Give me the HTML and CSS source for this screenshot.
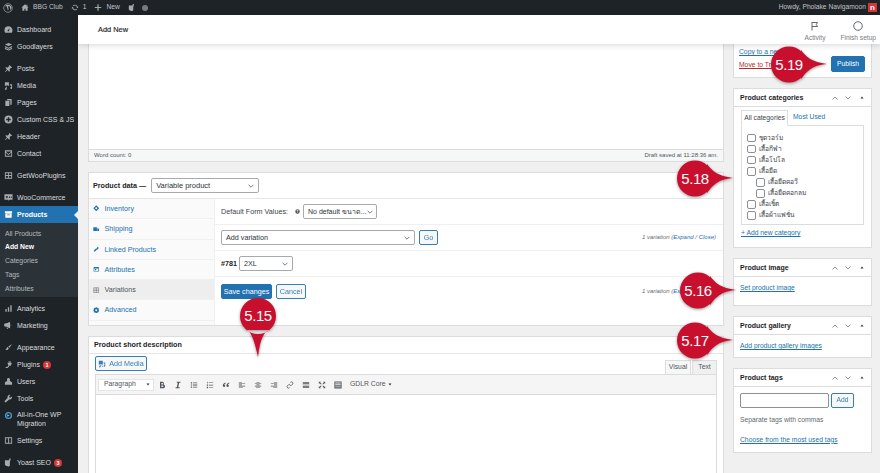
FILE: index.html
```html
<!DOCTYPE html>
<html lang="en">
<head>
<meta charset="utf-8">
<title>Add New Product</title>
<link rel="stylesheet" href="styles.css">
</head>
<body>
<svg class="defs" aria-hidden="true">
  <symbol id="i-wp" viewBox="0 0 20 20"><circle cx="10" cy="10" r="8.6" fill="none" stroke="currentColor" stroke-width="1.4"/><path d="M4 6.5h3.2L10 15l1.2-3.4-1.6-5.1h3.4L15.6 15l1.4-5c.3-1.4-.3-2.4-1-3.5L13 4 7 3.5z" fill="currentColor"/></symbol>
  <symbol id="i-home" viewBox="0 0 20 20"><path d="M10 2 1 10h2.5v8h5v-5h3v5h5v-8H19l-3-2.7V3h-2v2.5z" fill="currentColor"/></symbol>
  <symbol id="i-update" viewBox="0 0 20 20"><path d="M10 3a7 7 0 0 1 6.7 5H19l-3 4-3-4h1.6A5 5 0 0 0 6 7L4.5 5.6A7 7 0 0 1 10 3zM4 8l3 4H5.400A5 5 0 0 0 14 13l1.500 1.400A7 7 0 0 1 3.300 12H1z" fill="currentColor"/></symbol>
  <symbol id="i-plus" viewBox="0 0 20 20"><path d="M8.500 2h3v6.500H18v3h-6.500V18h-3v-6.500H2v-3h6.500z" fill="currentColor"/></symbol>
  <symbol id="i-yoast" viewBox="0 0 20 20"><path d="M2 5h11v13H5l-3-3zM12 1h3l-4 18H8z" fill="currentColor"/></symbol>
  <symbol id="i-gauge" viewBox="0 0 20 20"><path d="M10 3a9 9 0 0 0-9 9c0 2 .6 3.800 1.700 5h14.600A9 9 0 0 0 10 3zm1 9.500a1.500 1.500 0 1 1-2-1.400L13 7z" fill="currentColor"/></symbol>
  <symbol id="i-stack" viewBox="0 0 20 20"><path d="M10 2l8 3.500L10 9 2 5.500zM2 9l8 3.500L18 9v2.500L10 15l-8-3.500zM2 13l8 3.500 8-3.500v2.500L10 19l-8-3.500z" fill="currentColor"/></symbol>
  <symbol id="i-pin" viewBox="0 0 20 20"><path d="M12 2l6 6-1.500 1-1-.5-3 3 .5 4-1.500 1.500-3.500-3.500L3 18l-1 0 0-1 4.500-5L3 8.500 4.500 7l4 .5 3-3-.5-1z" fill="currentColor"/></symbol>
  <symbol id="i-media" viewBox="0 0 20 20"><path d="M2 3h9v7.500H8.500L7 9 5.500 10.500H2zM13 7h5v8.500a2 2 0 1 1-2-2V10h-3zM6 13v4.500a2 2 0 1 1-2-2v-2.500z" fill="currentColor"/></symbol>
  <symbol id="i-pages" viewBox="0 0 20 20"><path d="M7 2h10v13h-3V5H7zM3 6h9v12H3z" fill="currentColor"/></symbol>
  <symbol id="i-circle-plus" viewBox="0 0 20 20"><path d="M10 1a9 9 0 1 0 0 18 9 9 0 0 0 0-18zm-1.500 4h3v3.500H15v3h-3.500V15h-3v-3.500H5v-3h3.500z" fill="currentColor"/></symbol>
  <symbol id="i-mail" viewBox="0 0 20 20"><path d="M2 3h16v14H2zm2 3 6 5 6-5v-.5H4zm0 2.500V15h12V8.500l-6 5z" fill="currentColor" fill-rule="evenodd"/></symbol>
  <symbol id="i-grid" viewBox="0 0 20 20"><path d="M2 3h16v14H2zm2 2v4h5V5zm7 0v4h5V5zm-7 6v4h5v-4zm7 0v4h5v-4z" fill="currentColor" fill-rule="evenodd"/></symbol>
  <symbol id="i-woo" viewBox="0 0 20 20"><path d="M1 3h18v12h-7l-2 3v-3H1zm3 4 1 5 2-3 1 3 1-5zm7 1v3h2V8zm4 0v3h2V8z" fill="currentColor" fill-rule="evenodd"/></symbol>
  <symbol id="i-box" viewBox="0 0 20 20"><path d="M2 3h16v4H2zM3 8h14v9H3zm4 2v1.500h6V10z" fill="currentColor" fill-rule="evenodd"/></symbol>
  <symbol id="i-bars" viewBox="0 0 20 20"><path d="M3 11h3v6H3zM8.500 7h3v10h-3zM14 3h3v14h-3z" fill="currentColor"/></symbol>
  <symbol id="i-mega" viewBox="0 0 20 20"><path d="M12 2l1.500.5v13L12 16 6.500 13H4a4 4 0 0 1 0-8h2.500zM15 7a3 3 0 0 1 0 4.500zM6 14l2 .8.8 3.200H6.500z" fill="currentColor"/></symbol>
  <symbol id="i-brush" viewBox="0 0 20 20"><path d="M18 2 9.500 8l2.500 2.500L18 2zM8.500 9c-2 .5-2.500 2-3 3.500-.4 1-1.500 1.500-3 2 3 2 7 1.500 8-3z" fill="currentColor"/></symbol>
  <symbol id="i-plug" viewBox="0 0 20 20"><path d="M13 2h1.500v4H17v1.500l-2 5.500h-3l-1.500 2.500c-1.500 2-4 2.500-7 2.500v-2c2 0 4-.5 5-2L10 12 8 7.500V6h2.500V2H12v4h1z" fill="currentColor"/></symbol>
  <symbol id="i-user" viewBox="0 0 20 20"><path d="M10 2.500a3.500 3.500 0 0 1 2.300 6.200C15 9.500 18 11 18 13v4H2v-4c0-2 3-3.500 5.700-4.300A3.500 3.500 0 0 1 10 2.500z" fill="currentColor"/></symbol>
  <symbol id="i-wrench" viewBox="0 0 20 20"><path d="M17.500 5.500 14.500 8l-2.500-.5-.5-2.500L14.500 2A5 5 0 0 0 8 8.500L2 15a2 2 0 0 0 3 3l6.500-6A5 5 0 0 0 17.500 5.500z" fill="currentColor"/></symbol>
  <symbol id="i-migrate" viewBox="0 0 20 20"><path d="M10 2a8 8 0 1 0 0 16 8 8 0 0 0 0-16zm0 3a5 5 0 1 1 0 10 5 5 0 0 1 0-10z" fill="#3f9bd5" fill-rule="evenodd"/><path d="M7 7l6 3-6 3z" fill="currentColor"/></symbol>
  <symbol id="i-sliders" viewBox="0 0 20 20"><path d="M2 3h16v14H2zm2 2v10h5V5zm7 0v10h5V5zm-5 2h1v2H6zm7 3h1v2h-1z" fill="currentColor" fill-rule="evenodd"/></symbol>
  <symbol id="i-diamond" viewBox="0 0 20 20"><path d="M10 1l9 9-9 9-9-9zm0 6a3 3 0 1 0 0 6 3 3 0 0 0 0-6z" fill="currentColor" fill-rule="evenodd"/></symbol>
  <symbol id="i-truck" viewBox="0 0 20 20"><path d="M1 4h11v11H1zM13 7h3l3 3.500V15h-6z" fill="currentColor"/></symbol>
  <symbol id="i-link" viewBox="0 0 20 20"><path d="M14 2l4 4-6 6-2.500-1L9 9l3-3zM8 8l1 3 2 1-6 6-3-3z" fill="currentColor"/></symbol>
  <symbol id="i-attr" viewBox="0 0 20 20"><path d="M2 3h16v14H2zm2 5v7h12V8zm2 1h4v4H6z" fill="currentColor" fill-rule="evenodd"/></symbol>
  <symbol id="i-table" viewBox="0 0 20 20"><path d="M2.500 2.500h15v15h-15zM10 2.500v15M2.500 10h15" fill="none" stroke="currentColor" stroke-width="1.600"/></symbol>
  <symbol id="i-gear" viewBox="0 0 20 20"><path d="M8 1h4l.5 3 2.500-1.500 3 3L16.500 8l2.500.5v3l-2.500.5 1.500 2.500-3 3-2.500-1.500L12 19H8l-.5-3L5 17.500l-3-3L3.500 12 1 11.500v-3L3.500 8 2 5.500l3-3L7.500 4zM10 7a3 3 0 1 0 0 6 3 3 0 0 0 0-6z" fill="currentColor" fill-rule="evenodd"/></symbol>
  <symbol id="i-help" viewBox="0 0 20 20"><path d="M10 1a9 9 0 1 0 0 18 9 9 0 0 0 0-18zM9 14h2v2H9zm1-10a3.500 3.500 0 0 1 2 6.300c-.7.500-1 .9-1 2.200H9c0-2 .6-2.800 1.600-3.500.7-.5.900-.9.900-1.400a1.500 1.500 0 0 0-3 .4h-2A3.500 3.500 0 0 1 10 4z" fill="currentColor" fill-rule="evenodd"/></symbol>
  <symbol id="i-addmedia" viewBox="0 0 20 20"><path d="M2 2h10v9H9L7.500 9.500 6 11H2zM14 6h4v9a2 2 0 1 1-2-2V9h-2zM6.500 12v5a2 2 0 1 1-2-2v-3zM9 12h2v2H9zm1 3h2v2h-2z" fill="currentColor"/></symbol>
  <symbol id="i-flag" viewBox="0 0 20 20"><path d="M4 2v17M4 3h11l-2.500 4L15 11H4" fill="none" stroke="currentColor" stroke-width="1.800"/></symbol>
  <symbol id="i-ring" viewBox="0 0 20 20"><circle cx="10" cy="10" r="8.500" fill="none" stroke="currentColor" stroke-width="1.800"/></symbol>
  <symbol id="i-up" viewBox="0 0 12 8"><path d="M1 7l5-5 5 5" fill="none" stroke="currentColor" stroke-width="1.300"/></symbol>
  <symbol id="i-down" viewBox="0 0 12 8"><path d="M1 1l5 5 5-5" fill="none" stroke="currentColor" stroke-width="1.300"/></symbol>
  <symbol id="i-tri" viewBox="0 0 8 6"><path d="M4 1l3 4H1z" fill="currentColor"/></symbol>
  <symbol id="i-bold" viewBox="0 0 20 20"><path d="M5 2h6a4 4 0 0 1 3 6.500A4.500 4.500 0 0 1 11.500 18H5zm3.500 3v3.500H11A1.700 1.700 0 0 0 11 5zm0 6v4H11.500a2 2 0 0 0 0-4z" fill="currentColor" fill-rule="evenodd"/></symbol>
  <symbol id="i-italic" viewBox="0 0 20 20"><path d="M7 2h9v2.500h-3L10.500 15.500H14V18H4v-2.500h3L9.500 4.500H7z" fill="currentColor"/></symbol>
  <symbol id="i-ul" viewBox="0 0 20 20"><path d="M2 3h3v3H2zM7 3.500h11v2H7zM2 8.500h3v3H2zM7 9h11v2H7zM2 14h3v3H2zM7 14.500h11v2H7z" fill="currentColor"/></symbol>
  <symbol id="i-ol" viewBox="0 0 20 20"><path d="M3 2h1.500v4H3zM7 3.500h11v1.500H7zM2 8.500h3V12H2zM7 9.500h11V11H7zM2 14.500h3V18H2zM7 15h11v1.500H7z" fill="currentColor"/></symbol>
  <symbol id="i-quote" viewBox="0 0 20 20"><path d="M9 4C5 5 2 8 2 12a3 3 0 1 0 3.500-3c.5-1 1.800-2 3.500-3zM18 4c-4 1-7 4-7 8a3 3 0 1 0 3.500-3c.5-1 1.800-2 3.500-3z" fill="currentColor"/></symbol>
  <symbol id="i-al" viewBox="0 0 20 20"><path d="M2 3h8v1.500H2zM2 6h16v1.500H2zM2 9h8v1.500H2zM2 12h16v1.500H2zM2 15h10v1.500H2z" fill="currentColor"/></symbol>
  <symbol id="i-ac" viewBox="0 0 20 20"><path d="M6 3h8v1.500H6zM2 6h16v1.500H2zM6 9h8v1.500H6zM2 12h16v1.500H2zM5 15h10v1.500H5z" fill="currentColor"/></symbol>
  <symbol id="i-ar" viewBox="0 0 20 20"><path d="M10 3h8v1.500h-8zM2 6h16v1.500H2zM10 9h8v1.500h-8zM2 12h16v1.500H2zM8 15h10v1.500H8z" fill="currentColor"/></symbol>
  <symbol id="i-chain" viewBox="0 0 20 20"><path d="M11 3.500a3.500 3.500 0 0 1 5.500 4.500l-2.500 2.500a3.500 3.500 0 0 1-4.500.3M9 16.500A3.500 3.500 0 0 1 3.500 12L6 9.500a3.500 3.500 0 0 1 4.500-.3" fill="none" stroke="currentColor" stroke-width="2"/></symbol>
  <symbol id="i-more" viewBox="0 0 20 20"><path d="M2 3h16v4H2zM2 9h2v2H2zm4 0h3v2H6zm5 0h3v2h-3zm5 0h2v2h-2zM2 13h16v4H2z" fill="currentColor"/></symbol>
  <symbol id="i-full" viewBox="0 0 20 20"><path d="M2 2h5L5.500 3.500 9 7.500 7.500 9 3.500 5.500 2 7zM18 2v5l-1.500-1.500L12.500 9 11 7.500 14.500 3.500 13 2zM2 18v-5l1.500 1.500L7.500 11 9 12.500 5.500 16.500 7 18zM18 18h-5l1.500-1.500L11 12.500 12.500 11l4 3.500L18 13z" fill="currentColor"/></symbol>
  <symbol id="i-kitchen" viewBox="0 0 20 20"><path d="M1 1h18v18H1zm2 3v2h14V4zm0 4v2h14V8zm0 4v2h14v-2zm0 4v1h14v-1z" fill="currentColor" fill-rule="evenodd"/></symbol>
  <symbol id="i-caret" viewBox="0 0 10 6"><path d="M1 1l4 4 4-4" fill="none" stroke="currentColor" stroke-width="1.300"/></symbol>
  <symbol id="i-pin-right" viewBox="0 0 60 40"><path d="M19 1.500a18 18 0 1 1 0 36 18 18 0 0 1 0-36zM31 5c5 7 11 12 26 14-15 1-21 8-26 15z" fill="currentColor"/></symbol>
  <symbol id="i-pin-down" viewBox="0 0 40 62"><path d="M20 1a18 18 0 1 1 0 36 18 18 0 0 1 0-36zM8 33c5 1 8 9 12 27 2-18 6-26 12-27z" fill="currentColor"/></symbol>
</svg>

<div class="adminbar">
  <div class="bar-left">
    <svg class="bar-ic ic-wp"><use href="#i-wp"/></svg>
    <span class="bar-item"><svg class="bar-ic"><use href="#i-home"/></svg>BBG Club</span>
    <span class="bar-item"><svg class="bar-ic"><use href="#i-update"/></svg>1</span>
    <span class="bar-item"><svg class="bar-ic"><use href="#i-plus"/></svg>New</span>
    <svg class="bar-ic"><use href="#i-yoast"/></svg>
    <span class="dot"></span>
  </div>
  <div class="bar-right">Howdy, Pholake Navigamoon <span class="avatar">n</span></div>
</div>

<div class="wrap">
  <nav class="menu">
    <ul class="mgroup g1">
      <li><svg class="mi"><use href="#i-gauge"/></svg>Dashboard</li>
      <li><svg class="mi"><use href="#i-stack"/></svg>Goodlayers</li>
    </ul>
    <ul class="mgroup">
      <li><svg class="mi"><use href="#i-pin"/></svg>Posts</li>
      <li><svg class="mi"><use href="#i-media"/></svg>Media</li>
      <li><svg class="mi"><use href="#i-pages"/></svg>Pages</li>
      <li><svg class="mi"><use href="#i-circle-plus"/></svg>Custom CSS &amp; JS</li>
      <li><svg class="mi"><use href="#i-pin"/></svg>Header</li>
      <li><svg class="mi"><use href="#i-mail"/></svg>Contact</li>
    </ul>
    <ul class="mgroup">
      <li><svg class="mi"><use href="#i-grid"/></svg>GetWooPlugins</li>
    </ul>
    <ul class="mgroup">
      <li><svg class="mi"><use href="#i-woo"/></svg>WooCommerce</li>
      <li class="current"><svg class="mi"><use href="#i-box"/></svg>Products</li>
    </ul>
    <ul class="submenu">
      <li>All Products</li>
      <li class="on">Add New</li>
      <li>Categories</li>
      <li>Tags</li>
      <li>Attributes</li>
    </ul>
    <ul class="mgroup g-after">
      <li><svg class="mi"><use href="#i-bars"/></svg>Analytics</li>
      <li><svg class="mi"><use href="#i-mega"/></svg>Marketing</li>
    </ul>
    <ul class="mgroup">
      <li><svg class="mi"><use href="#i-brush"/></svg>Appearance</li>
      <li><svg class="mi"><use href="#i-plug"/></svg>Plugins <span class="badge">1</span></li>
      <li><svg class="mi"><use href="#i-user"/></svg>Users</li>
      <li><svg class="mi"><use href="#i-wrench"/></svg>Tools</li>
      <li class="two"><svg class="mi"><use href="#i-migrate"/></svg><span>All-in-One WP Migration</span></li>
      <li><svg class="mi"><use href="#i-sliders"/></svg>Settings</li>
    </ul>
    <ul class="mgroup">
      <li><svg class="mi"><use href="#i-yoast"/></svg>Yoast SEO <span class="badge">3</span></li>
    </ul>
  </nav>

  <div class="page">
    <header class="head">
      <h1 class="title">Add New</h1>
      <div class="head-actions">
        <div class="act"><svg class="act-ic"><use href="#i-flag"/></svg>Activity</div>
        <div class="act"><svg class="act-ic"><use href="#i-ring"/></svg>Finish setup</div>
      </div>
    </header>

    <div class="cols">
      <main class="main">
        <section class="box editor">
          <div class="editor-body"></div>
          <div class="status"><span>Word count: 0</span><span>Draft saved at 11:28:36 am.</span></div>
        </section>

        <section class="box pdata">
          <div class="pdata-head">
            <strong>Product data —</strong>
            <span class="select sel-type">Variable product<svg class="caret"><use href="#i-caret"/></svg></span>
          </div>
          <div class="pdata-body">
            <ul class="tabs">
              <li><svg class="ti"><use href="#i-diamond"/></svg>Inventory</li>
              <li><svg class="ti"><use href="#i-truck"/></svg>Shipping</li>
              <li><svg class="ti"><use href="#i-link"/></svg>Linked Products</li>
              <li><svg class="ti"><use href="#i-attr"/></svg>Attributes</li>
              <li class="active"><svg class="ti"><use href="#i-table"/></svg>Variations</li>
              <li><svg class="ti"><use href="#i-gear"/></svg>Advanced</li>
            </ul>
            <div class="panel">
              <div class="prow r1">
                <span class="lbl">Default Form Values:</span>
                <svg class="help"><use href="#i-help"/></svg>
                <span class="select sel-def">No default ขนาด...<svg class="caret"><use href="#i-caret"/></svg></span>
              </div>
              <div class="prow r2">
                <span class="select sel-add">Add variation<svg class="caret"><use href="#i-caret"/></svg></span>
                <span class="btn">Go</span>
                <span class="vcount">1 variation (<a>Expand</a> / <a>Close</a>)</span>
              </div>
              <div class="prow r3">
                <strong class="vid">#781</strong>
                <span class="select sel-size">2XL<svg class="caret"><use href="#i-caret"/></svg></span>
              </div>
              <div class="prow r4">
                <span class="btn primary">Save changes</span>
                <span class="btn">Cancel</span>
                <span class="vcount">1 variation (<a>Expand</a> / <a>Close</a>)</span>
              </div>
            </div>
          </div>
        </section>

        <section class="box short">
          <h2 class="box-title short-title">Product short description</h2>
          <div class="short-body">
            <div class="media-row">
              <span class="btn media"><svg class="mbi"><use href="#i-addmedia"/></svg>Add Media</span>
              <div class="etabs"><span class="etab on">Visual</span><span class="etab">Text</span></div>
            </div>
            <div class="mce">
              <div class="toolbar">
                <span class="para">Paragraph<svg class="ptri"><use href="#i-tri"/></svg></span>
                <svg class="tb"><use href="#i-bold"/></svg>
                <svg class="tb"><use href="#i-italic"/></svg>
                <svg class="tb"><use href="#i-ul"/></svg>
                <svg class="tb"><use href="#i-ol"/></svg>
                <svg class="tb"><use href="#i-quote"/></svg>
                <svg class="tb"><use href="#i-al"/></svg>
                <svg class="tb"><use href="#i-ac"/></svg>
                <svg class="tb"><use href="#i-ar"/></svg>
                <svg class="tb"><use href="#i-chain"/></svg>
                <svg class="tb"><use href="#i-more"/></svg>
                <svg class="tb"><use href="#i-full"/></svg>
                <svg class="tb"><use href="#i-kitchen"/></svg>
                <span class="gdlr">GDLR Core<svg class="ptri"><use href="#i-tri"/></svg></span>
              </div>
            </div>
          </div>
        </section>
      </main>

      <aside class="side">
        <section class="box publish">
          <div class="pub-links">
            <a>Copy to a new draft</a>
            <a class="trash">Move to Trash</a>
          </div>
          <span class="btn primary pub-btn">Publish</span>
        </section>

        <section class="box">
          <div class="mhead"><h2 class="box-title">Product categories</h2><span class="ctrl"><svg class="c1"><use href="#i-up"/></svg><svg class="c1"><use href="#i-down"/></svg><svg class="c2"><use href="#i-tri"/></svg></span></div>
          <div class="cat-body">
            <div class="cat-tabs"><span class="cat-tab on">All categories</span><a class="cat-tab">Most Used</a></div>
            <ul class="cat-list">
              <li><i class="cb"></i>ชุดวอร์ม</li>
              <li><i class="cb"></i>เสื้อกีฬา</li>
              <li><i class="cb"></i>เสื้อโปโล</li>
              <li><i class="cb"></i>เสื้อยืด</li>
              <li class="sub"><i class="cb"></i>เสื้อยืดคอวี</li>
              <li class="sub"><i class="cb"></i>เสื้อยืดคอกลม</li>
              <li><i class="cb"></i>เสื้อเชิ้ต</li>
              <li><i class="cb"></i>เสื้อผ้าแฟชั่น</li>
            </ul>
            <a class="ulink add-cat">+ Add new category</a>
          </div>
        </section>

        <section class="box">
          <div class="mhead"><h2 class="box-title">Product image</h2><span class="ctrl"><svg class="c1"><use href="#i-up"/></svg><svg class="c1"><use href="#i-down"/></svg><svg class="c2"><use href="#i-tri"/></svg></span></div>
          <div class="img-body"><a class="ulink">Set product image</a></div>
        </section>

        <section class="box">
          <div class="mhead"><h2 class="box-title">Product gallery</h2><span class="ctrl"><svg class="c1"><use href="#i-up"/></svg><svg class="c1"><use href="#i-down"/></svg><svg class="c2"><use href="#i-tri"/></svg></span></div>
          <div class="gal-body"><a class="ulink">Add product gallery images</a></div>
        </section>

        <section class="box">
          <div class="mhead"><h2 class="box-title">Product tags</h2><span class="ctrl"><svg class="c1"><use href="#i-up"/></svg><svg class="c1"><use href="#i-down"/></svg><svg class="c2"><use href="#i-tri"/></svg></span></div>
          <div class="tag-body">
            <div class="tag-row"><span class="tag-input"></span><span class="btn">Add</span></div>
            <p class="hint">Separate tags with commas</p>
            <a class="ulink">Choose from the most used tags</a>
          </div>
        </section>
      </aside>
    </div>
  </div>
</div>

<div class="pin pin-r p519"><svg class="pin-shape"><use href="#i-pin-right"/></svg><span class="pin-num">5.19</span></div>
<div class="pin pin-r p518"><svg class="pin-shape"><use href="#i-pin-right"/></svg><span class="pin-num">5.18</span></div>
<div class="pin pin-r p516"><svg class="pin-shape"><use href="#i-pin-right"/></svg><span class="pin-num">5.16</span></div>
<div class="pin pin-r p517"><svg class="pin-shape"><use href="#i-pin-right"/></svg><span class="pin-num">5.17</span></div>
<div class="pin pin-d p515"><svg class="pin-shape"><use href="#i-pin-down"/></svg><span class="pin-num">5.15</span></div>
</body>
</html>
```

FILE: styles.css
```css
* { box-sizing: border-box; }
html, body { margin: 0; padding: 0; }
body {
  width: 880px;
  height: 473px;
  overflow: hidden;
  position: relative;
  background: #f0f0f1;
  color: #3c434a;
  font: 7.2px/1.3 "Liberation Sans", "Noto Sans CJK SC", "DejaVu Sans", sans-serif;
}
ul { list-style: none; margin: 0; padding: 0; }
h1, h2, p { margin: 0; }
a { color: #2271b1; }
.defs { position: absolute; width: 0; height: 0; }

/* admin bar */
.adminbar {
  height: 15px;
  background: #1d2327;
  color: #c3c4c7;
  font-size: 6.700px;
  display: flex;
  justify-content: space-between;
  align-items: center;
  padding: 0 3px 0 3px;
}
.bar-left { display: flex; align-items: center; gap: 8px; }
.bar-item { display: inline-flex; align-items: center; gap: 4px; }
.bar-ic { width: 8px; height: 9px; color: #a7aaad; flex: none; }
.ic-wp { width: 10px; height: 10px; }
.dot { width: 6px; height: 6px; border-radius: 50%; background: #787c82; margin-left: -2px; }
.bar-right { display: flex; align-items: center; gap: 2px; }
.avatar {
  width: 9px; height: 9px;
  background: #d63638;
  color: #fff;
  font-weight: 700;
  font-size: 8px;
  line-height: 9px;
  text-align: center;
  display: inline-block;
}

.wrap { display: flex; height: 458px; }

/* side menu */
.menu {
  width: 78px;
  flex: none;
  background: #1d2327;
  color: #dcdcde;
  font-size: 7px;
  padding-top: 6px;
  overflow: hidden;
}
.mgroup + .mgroup { margin-top: 5px; }
.mgroup.g-after { margin-top: 3px; }
.mgroup li {
  height: 17px;
  display: flex;
  align-items: center;
  padding-left: 4px;
  position: relative;
}
.mgroup li.two { height: 25px; align-items: center; line-height: 8.500px; }
.mgroup li.two .mi { margin-top: -8px; }
.mi { width: 9px; height: 9px; margin-right: 4px; color: #a7aaad; flex: none; }
.mgroup li.current { background: #2271b1; color: #fff; font-weight: 700; }
.mgroup li.current .mi { color: #fff; }
.mgroup li.current::after {
  content: "";
  position: absolute;
  right: 0;
  top: 5px;
  border: 4px solid transparent;
  border-right-color: #f0f0f1;
  border-left: 0;
}
.badge {
  width: 8px; height: 8px;
  margin-left: 3px;
  border-radius: 50%;
  background: #d63638;
  color: #fff;
  font-size: 5.500px;
  font-weight: 700;
  line-height: 8px;
  text-align: center;
}
.submenu {
  background: #2c3338;
  color: #b4b9be;
  height: 74px;
  padding-top: 4px;
  font-size: 6.800px;
}
.submenu li { height: 13.900px; display: flex; align-items: center; padding-left: 5px; }
.submenu li.on { color: #fff; font-weight: 700; }

/* header */
.page { flex: 1; min-width: 0; display: flex; flex-direction: column; }
.head {
  height: 29px;
  flex: none;
  background: #fff;
  box-shadow: 0 1px 6px rgba(0, 0, 0, .16);
  display: flex;
  justify-content: space-between;
  align-items: center;
  padding: 0 0 0 20px;
  position: relative;
  z-index: 2;
}
.title { font-size: 7.400px; font-weight: 400; color: #1d2327; -webkit-text-stroke: .15px #1d2327; }
.head-actions { display: flex; gap: 15px; padding: 5px 4px 0 0; }
.act { display: flex; flex-direction: column; align-items: center; gap: 3px; color: #787c82; font-size: 6.600px; }
.act-ic { width: 10px; height: 10px; color: #50575e; }

/* columns */
.cols { flex: 1; min-height: 0; display: flex; padding-left: 10px; gap: 9px; overflow: hidden; }
.main { width: 636px; flex: none; display: flex; flex-direction: column; gap: 10px; }
.side { width: 139px; flex: none; display: flex; flex-direction: column; gap: 10px; font-size: 6.750px; }
.box { background: #fff; border: 1px solid #dcdcde; }

/* editor */
.editor { height: 118px; flex: none; border-top: 0; display: flex; flex-direction: column; }
.editor-body { flex: 1; }
.status {
  height: 12px;
  flex: none;
  background: #f6f7f7;
  border-top: 1px solid #dcdcde;
  display: flex;
  justify-content: space-between;
  align-items: center;
  padding: 0 5px;
  font-size: 6px;
  color: #50575e;
}

/* product data */
.pdata { height: 154px; flex: none; display: flex; flex-direction: column; }
.pdata-head {
  height: 26px;
  flex: none;
  display: flex;
  align-items: center;
  gap: 5px;
  padding: 0 4px;
  border-bottom: 1px solid #e5e5e5;
  color: #1d2327;
}
.select {
  display: inline-flex;
  align-items: center;
  justify-content: space-between;
  height: 15px;
  padding: 0 4px;
  background: #fff;
  border: 1px solid #a7aaad;
  border-radius: 2px;
  color: #2c3338;
  white-space: nowrap;
}
.caret { width: 6px; height: 4px; color: #50575e; flex: none; }
.sel-type { width: 108px; font-size: 7.500px; }
.pdata-body { flex: 1; min-height: 0; display: flex; }
.tabs { width: 126px; flex: none; background: #fafafa; border-right: 1px solid #f0f0f1; }
.tabs li {
  height: 20.300px;
  display: flex;
  align-items: center;
  gap: 5px;
  padding-left: 4px;
  color: #2271b1;
  border-bottom: 1px solid #f0f0f1;
}
.tabs li.active { background: #eee; color: #50575e; }
.ti { width: 6.500px; height: 6.500px; flex: none; color: #2271b1; }
.tabs li.active .ti { color: #50575e; }
.panel { flex: 1; min-width: 0; display: flex; flex-direction: column; }
.prow {
  display: flex;
  align-items: center;
  padding: 0 7px 0 6px;
  border-bottom: 1px solid #f0f0f1;
}
.r1 { height: 26px; }
.r2 { height: 26px; gap: 4px; }
.r3 { height: 26px; gap: 2px; }
.r4 { height: 25px; padding-top: 4px; gap: 4px; border-bottom: 0; }
.lbl { margin-right: 7px; }
.help { width: 5px; height: 5px; color: #50575e; margin-right: 3px; }
.sel-def { width: 74px; font-size: 7px; }
.sel-add { width: 194px; }
.sel-size { width: 54px; }
.vid { color: #1d2327; }
.vcount { margin-left: auto; font-size: 6px; font-style: italic; color: #646970; }
.btn {
  display: inline-flex;
  align-items: center;
  justify-content: center;
  height: 15px;
  padding: 0 5px;
  border: 1px solid #2271b1;
  border-radius: 2px;
  background: #f6f7f7;
  color: #2271b1;
  opacity: .9;
}
.btn.primary { background: #2271b1; color: #fff; opacity: 1; }
.r2 .btn { width: 19px; padding: 0; }
.r4 .btn.primary { width: 51px; padding: 0; }
.r4 .btn:not(.primary) { width: 30px; padding: 0; }

/* short description */
.short { flex: 1; min-height: 0; border-bottom: 0; display: flex; flex-direction: column; }
.box-title { font-size: 7px; font-weight: 700; color: #1d2327; }
.short-title { height: 17px; line-height: 16px; padding-left: 5px; border-bottom: 1px solid #e5e5e5; flex: none; font-size: 7.200px; }
.short-body { flex: 1; padding: 2px 6px 0; display: flex; flex-direction: column; min-height: 0; }
.media-row { display: flex; justify-content: space-between; align-items: flex-end; height: 18px; flex: none; }
.btn.media { width: 52px; height: 15px; gap: 3px; padding: 0; margin-bottom: 3px; }
.mbi { width: 8px; height: 8px; }
.etabs { display: flex; gap: 1px; }
.etab {
  width: 25px;
  height: 14px;
  display: flex;
  align-items: center;
  justify-content: center;
  background: #f0f0f1;
  border: 1px solid #dcdcde;
  border-bottom: 0;
  color: #50575e;
  font-size: 6.800px;
}
.etab.on { background: #f6f7f7; width: 26px; }
.mce { flex: 1; border: 1px solid #dcdcde; border-bottom: 0; min-height: 0; }
.toolbar {
  height: 20px;
  background: #f5f5f5;
  border-bottom: 1px solid #dcdcde;
  display: flex;
  align-items: center;
  padding-left: 2px;
  gap: 8px;
}
.para {
  width: 56px;
  height: 12px;
  margin-right: -4px;
  padding: 0 3px 0 5px;
  display: inline-flex;
  justify-content: space-between;
  align-items: center;
  background: #fff;
  border: 1px solid #e5e5e5;
  color: #50575e;
  font-size: 6.800px;
}
.ptri { width: 4px; height: 3px; transform: rotate(180deg); color: #2c3338; }
.tb { width: 8px; height: 8px; color: #50575e; flex: none; }
.gdlr { display: inline-flex; align-items: center; gap: 2px; color: #50575e; font-size: 6.800px; }

/* side boxes */
.publish {
  height: 34px;
  flex: none;
  border-top: 0;
  display: flex;
  justify-content: space-between;
  align-items: flex-start;
  padding: 4px 6px 0 5px;
}
.pub-links { display: flex; flex-direction: column; gap: 4px; }
.pub-links a { text-decoration: underline; white-space: nowrap; }
.pub-links .trash { color: #b32d2e; }
.pub-btn { width: 34px; height: 16px; margin-top: 8px; padding: 0; }
.mhead {
  height: 18px;
  display: flex;
  justify-content: space-between;
  align-items: center;
  padding: 0 7px 0 6px;
  border-bottom: 1px solid #dcdcde;
}
.ctrl { display: flex; align-items: center; gap: 7px; color: #50575e; }
.c1 { width: 6px; height: 4px; }
.c2 { width: 4px; height: 3px; margin-left: 2px; color: #2c3338; }
.cat-body { padding: 3px 7px 0; height: 140px; }
.cat-tabs { display: flex; height: 15px; align-items: stretch; gap: 5px; }
.cat-tab { display: flex; align-items: center; color: #2271b1; }
.cat-tab.on {
  width: 47px;
  justify-content: center;
  background: #fff;
  color: #3c434a;
  border: 1px solid #dcdcde;
  border-bottom: 1px solid #fff;
  margin-bottom: -1px;
  position: relative;
  z-index: 1;
}
.cat-list {
  height: 100px;
  border: 1px solid #dcdcde;
  padding: 6.500px 0 0 5px;
  font-size: 6.600px;
  color: #3c434a;
}
.cat-list li { height: 11.100px; display: flex; align-items: center; gap: 3px; }
.cat-list .sub { padding-left: 9px; }
.cb {
  width: 8.500px;
  height: 8.500px;
  flex: none;
  border: 1px solid #8c8f94;
  border-radius: 2px;
  background: #fff;
}
.ulink { text-decoration: underline; color: #2271b1; }
.add-cat { display: block; margin-top: 4px; }
.img-body { height: 28px; padding: 7px 6px 0; }
.gal-body { height: 22px; padding: 7px 6px 0; }
.tag-body { padding: 6px 6px 0; height: 65px; }
.tag-row { display: flex; gap: 2px; height: 15px; }
.tag-input { width: 89px; border: 1px solid #8c8f94; border-radius: 2px; background: #fff; }
.tag-row .btn { width: 23px; padding: 0; }
.hint { margin-top: 7.500px; color: #646970; }
.tag-body .ulink { display: block; margin-top: 11.500px; }

/* callouts */
.pin { position: absolute; z-index: 5; color: #c8102e; }
.pin-r { width: 60px; height: 40px; }
.pin-d { width: 40px; height: 62px; }
.pin-shape {
  display: block;
  width: 100%;
  height: 100%;
  filter: drop-shadow(0 1.500px 1.500px rgba(0, 0, 0, .4));
}
.pin-num {
  position: absolute;
  left: 1px;
  top: 2px;
  width: 36px;
  height: 36px;
  display: flex;
  align-items: center;
  justify-content: center;
  color: #fff;
  font-size: 15px;
  letter-spacing: -.4px;
}
.pin-d .pin-num { left: 2px; top: 1px; }
.p519 { left: 770px; top: 45px; }
.p518 { left: 676px; top: 159px; }
.p516 { left: 679px; top: 271px; }
.p517 { left: 676px; top: 321px; }
.p515 { left: 238px; top: 297px; }
```
